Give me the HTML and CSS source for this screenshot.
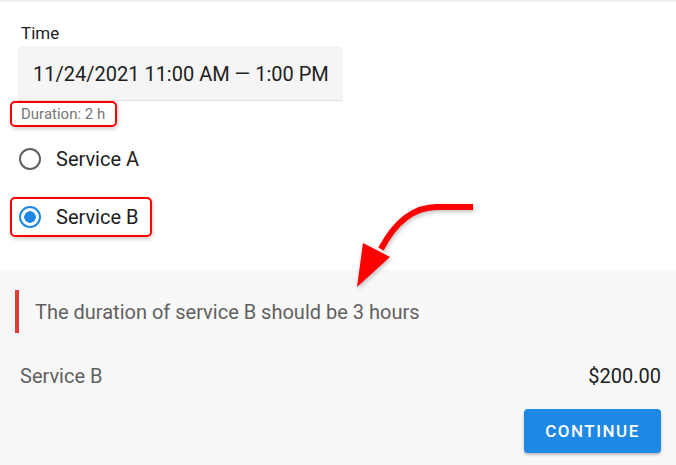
FILE: index.html
```html
<!DOCTYPE html>
<html lang="en">
<head>
    <meta charset="UTF-8">
    <title>Booking</title>
    <link rel="stylesheet" href="styles.css">
</head>
<body>
    <div class="page">
        <div class="form">
            <label class="field-label">Time</label>
            <div class="field">11/24/2021 11:00 AM — 1:00 PM</div>
            <span class="helper mark">Duration: 2 h</span>
            <div class="options">
                <label class="option">
                    <span class="radio"></span>
                    <span>Service A</span>
                </label>
                <label class="option mark">
                    <span class="radio checked"></span>
                    <span>Service B</span>
                </label>
            </div>
        </div>
        <div class="summary">
            <div class="warning">The duration of service B should be 3 hours</div>
            <div class="line">
                <span class="line-name">Service B</span>
                <span class="line-price">$200.00</span>
            </div>
            <div class="actions">
                <button class="actionbtn">Continue</button>
            </div>
        </div>
        <svg class="arrow" width="676" height="465" viewBox="0 0 676 465">
            <path d="M473,207 L437,207 Q403,207 381,249" fill="none" stroke="#ff0000" stroke-width="6"/>
            <polygon points="363,243 390,257 357,287" fill="#ff0000"/>
        </svg>
    </div>
</body>
</html>
```

FILE: styles.css
```css
body {
    font-family: Roboto, "Liberation Sans", sans-serif;
    background-color: white;
    margin: 0;
    color: #212121;
}
.page {
    position: relative;
    width: 676px;
    height: 465px;
    overflow: hidden;
}
.form {
    border-top: 2px solid #f0f0f0;
    height: 270px;
    padding-left: 18px;
    box-sizing: border-box;
}
.field-label {
    display: block;
    font-size: 17px;
    margin: 21px 0 0 3px;
    line-height: 20px;
}
.field {
    width: 325px;
    height: 55px;
    margin-top: 3px;
    box-sizing: border-box;
    padding: 15px 0 0 15px;
    background-color: #f5f5f5;
    border-bottom: 1px solid #e0e0e0;
    border-radius: 4px 4px 0 0;
    font-size: 20px;
    line-height: 26px;
}
.helper {
    display: inline-block;
    font-size: 15px;
    color: #757575;
    line-height: 18px;
    margin: 0 0 0 -8px;
    padding: 2px 10px 2px 9px;
}
.mark {
    border: 2px solid #f00;
    border-radius: 5px;
    box-shadow: 1px 2px 4px rgba(0,0,0,0.2);
}
.options {
    display: flex;
    flex-direction: column;
    align-items: flex-start;
    gap: 18px;
    margin-top: 12px;
}
.option {
    display: flex;
    align-items: center;
    gap: 15px;
    font-size: 20px;
    height: 40px;
    padding: 0 12px 0 1px;
    box-sizing: border-box;
}
.option.mark {
    margin-left: -8px;
    padding-left: 7px;
}
.radio {
    width: 22px;
    height: 22px;
    box-sizing: border-box;
    border: 2px solid #616161;
    border-radius: 50%;
}
.radio.checked {
    border-color: #1e88e5;
    background: radial-gradient(circle, #1e88e5 0 5.5px, transparent 6px);
}
.summary {
    background-color: #f8f8f8;
    height: 195px;
    padding: 20px 15px 0 15px;
    box-sizing: border-box;
}
.warning {
    border-left: 4px solid #e53935;
    height: 43px;
    display: flex;
    align-items: center;
    padding-left: 16px;
    font-size: 20px;
    color: #616161;
}
.line {
    display: flex;
    justify-content: space-between;
    margin-top: 31px;
    padding-left: 5px;
    font-size: 20px;
    line-height: 24px;
}
.line-name {
    color: #616161;
}
.line-price {
    color: #212121;
}
.actions {
    display: flex;
    justify-content: flex-end;
    margin-top: 21px;
}
.actionbtn {
    width: 137px;
    height: 44px;
    background-color: #1e88e5;
    color: white;
    border: none;
    border-radius: 4px;
    font-family: Roboto, sans-serif;
    font-size: 17px;
    font-weight: 500;
    letter-spacing: 1.5px;
    text-transform: uppercase;
    box-shadow: 0 2px 3px rgba(0,0,0,0.25);
}
.arrow {
    position: absolute;
    top: 0;
    left: 0;
    filter: drop-shadow(1px 2px 2px rgba(0,0,0,0.25));
}
```
